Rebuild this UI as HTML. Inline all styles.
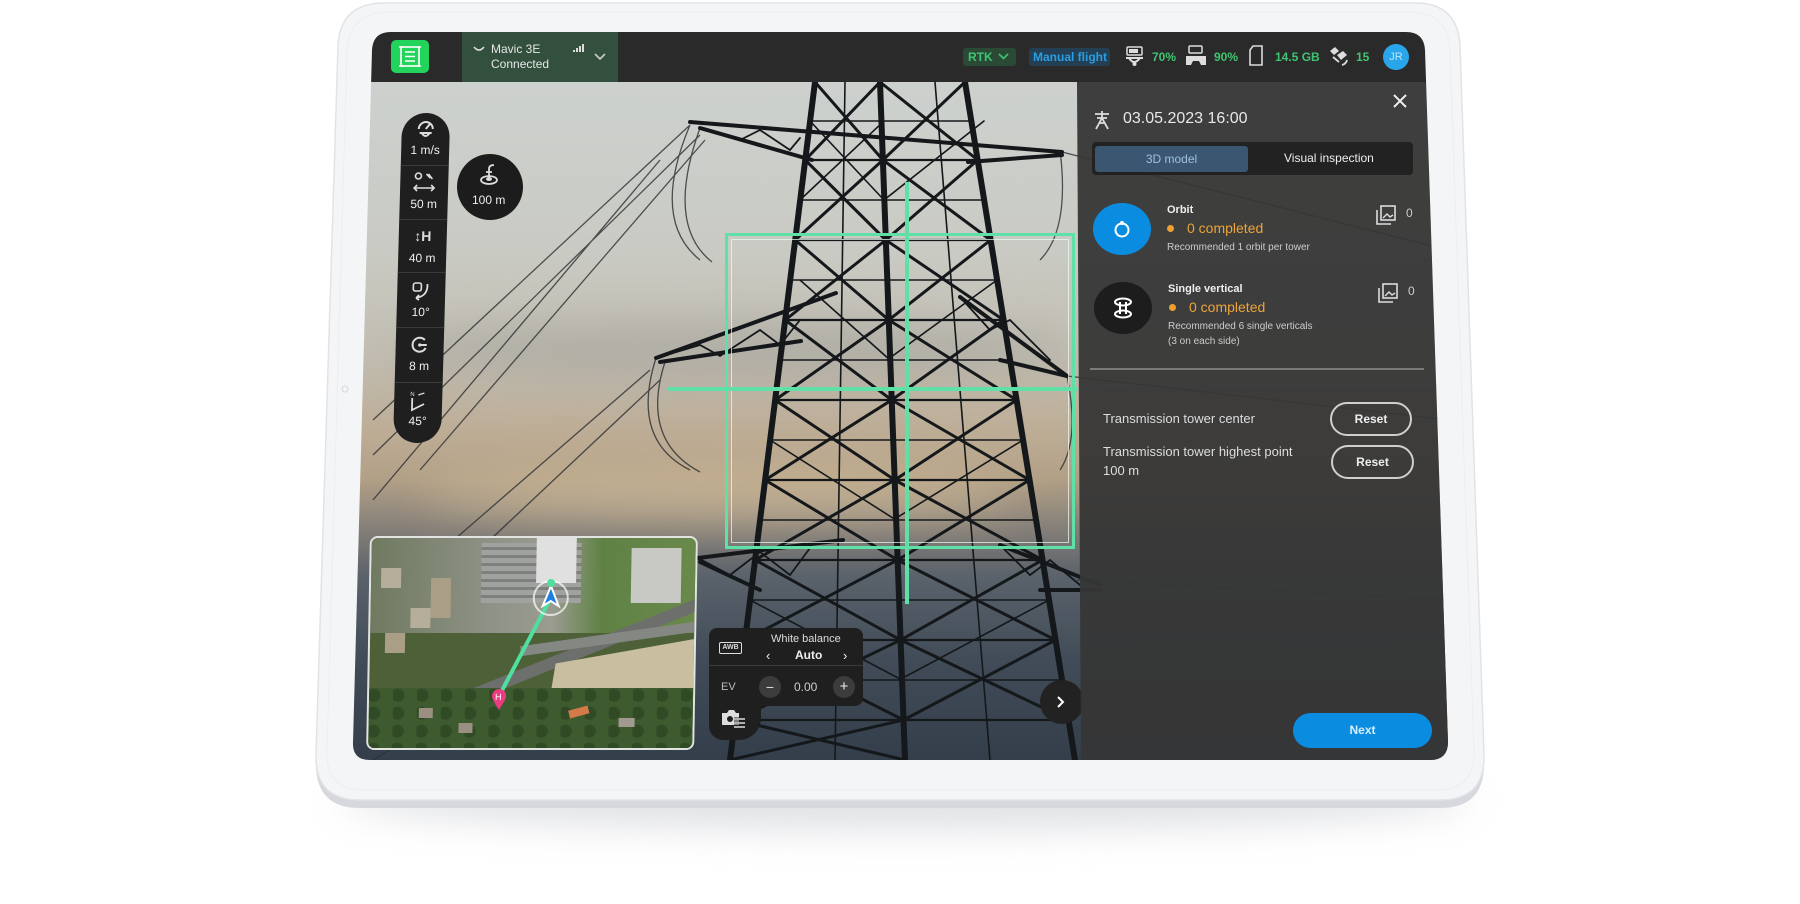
<!DOCTYPE html>
<html><head><meta charset="utf-8">
<style>
*{margin:0;padding:0;box-sizing:border-box}
body{width:1800px;height:904px;background:#fff;position:relative;overflow:hidden;font-family:"Liberation Sans",sans-serif;color:#fff}
.abs{position:absolute}
#screen{position:absolute;left:0;top:0;width:1800px;height:904px;clip-path:path("M391,32 L1406,32 Q1424,32 1425,50 L1448,742 Q1448,760 1430,760 L370,760 Q352,760 353,742 L372,50 Q373,32 391,32 Z")}
.t{position:absolute;white-space:nowrap}
.tb{position:absolute;left:393px;top:113px;width:48px;height:330px;background:#1f1f1f;border-radius:24px;transform:skewX(-1.6deg);transform-origin:bottom}
.tb .it{position:absolute;left:0;width:48px;text-align:center;font-size:12px;color:#eee}
.tb .sep{position:absolute;left:0;width:48px;height:1px;background:#3a3a3a}
.reset{position:absolute;border:2px solid #cfcfcf;border-radius:18px;font-size:12px;font-weight:bold;color:#eee;text-align:center}
</style></head><body>
<div class="abs" style="left:340px;top:770px;width:1130px;height:60px;border-radius:50%;background:#d8dade;filter:blur(18px);opacity:.8"></div>
<svg class="abs" style="left:0;top:0" width="1800" height="904">
<path d="M385,10 L1415,10 Q1458,10 1460,53 L1484,762 Q1485,808 1440,808 L360,808 Q315,808 316,762 L338,53 Q340,10 385,10 Z" fill="#d6d8dd"/>
<path d="M385,3 L1415,3 Q1458,3 1460,46 L1484,755 Q1485,800 1440,800 L360,800 Q315,800 316,755 L338,46 Q340,3 385,3 Z" fill="#f4f5f7" stroke="#e1e3e7" stroke-width="1.5"/>
<path d="M390,12 L1410,12 Q1448,12 1450,50 L1474,752 Q1475,790 1436,790 L364,790 Q326,790 327,752 L347,50 Q349,12 390,12 Z" fill="none" stroke="#eceef1" stroke-width="1"/>
<circle cx="345" cy="389" r="3" fill="none" stroke="#d5d7db"/>
</svg>

<div id="screen">
 <div class="abs" style="left:340px;top:80px;width:1120px;height:690px;background:linear-gradient(to bottom,#cdd1ce 0%,#c9cac3 25%,#c3beb2 40%,#bcab93 52%,#b19f86 58%,#857f78 65%,#5a626b 72%,#414c58 84%,#323d49 100%)"></div>
 <div class="abs" style="left:380px;top:320px;width:700px;height:60px;border-radius:50%;background:#9e9e98;filter:blur(20px);opacity:.5"></div>
 <div class="abs" style="left:420px;top:470px;width:600px;height:50px;border-radius:50%;background:#d8c39f;filter:blur(22px);opacity:.6"></div>
 <svg class="abs" style="left:0;top:0" width="1800" height="904">
  <g stroke="#2b2e31" stroke-width="1.3" fill="none" opacity=".8">
   <path d="M690,125 L373,420 M700,135 L373,455 M660,160 L373,500 M650,370 L373,610 M660,380 L373,650 M700,560 L373,760 M705,140 L420,470"/>
   <path d="M690,125 Q650,220 700,260 M700,128 Q665,225 712,262 M1060,150 Q1070,230 1040,260 M656,358 Q630,440 690,470 M665,362 Q640,440 700,472 M1067,376 Q1080,440 1060,470"/>
   <path d="M1062,152 L1448,250 M1067,376 L1448,420 M1077,580 L1448,600"/>
  </g>
  <g stroke="#15181b" fill="none" stroke-linecap="round">
   <path stroke-width="6" d="M815,82 L730,760 M880,82 L905,760 M965,82 L1075,760"/>
   <path stroke-width="3" d="M815,82 L882.9,160 M880,82 L805.2,160 M805.2,160 L885.8,240 M882.9,160 L795.2,240 M795.2,240 L888.8,320 M885.8,240 L785.2,320 M785.2,320 L891.7,400 M888.8,320 L775.1,400 M775.1,400 L894.7,480 M891.7,400 L765.1,480 M765.1,480 L897.6,560 M894.7,480 L755.1,560 M755.1,560 L900.6,640 M897.6,560 L745,640 M745,640 L903.5,720 M900.6,640 L735,720 M735,720 L905,760 M903.5,720 L730,760"/>
   <path stroke-width="3" d="M880,82 L977.7,160 M965,82 L882.9,160 M882.9,160 L990.6,240 M977.7,160 L885.8,240 M885.8,240 L1003.6,320 M990.6,240 L888.8,320 M888.8,320 L1016.6,400 M1003.6,320 L891.7,400 M891.7,400 L1029.6,480 M1016.6,400 L894.7,480 M894.7,480 L1042.6,560 M1029.6,480 L897.6,560 M897.6,560 L1055.5,640 M1042.6,560 L900.6,640 M900.6,640 L1068.5,720 M1055.5,640 L903.5,720"/>
   <path stroke-width="2.2" d="M805,160 L978,160 M795,240 L991,240 M785,320 L1004,320 M775,400 L1017,400 M765,480 L1030,480 M755,560 L1043,560 M745,640 L1056,640 M735,720 L1069,720"/>
   <path stroke-width="1.6" d="M810,121 L971,121 M800,200 L984,200 M790,280 L997,280 M780,360 L1010,360 M770,440 L1023,440 M760,520 L1036,520 M750,600 L1049,600 M740,680 L1062,680 M810,121 L884,200 M884,121 L800,200 M984,121 L884,200 M800,280 L890,360 M997,280 L887,360 M770,440 L896,520 M1023,440 L893,520 M750,600 L902,680 M1049,600 L899,680 M845,82 L835,760 M935,82 L990,760"/>
   <path stroke-width="4" d="M690,122 L1062,152 M700,128 L812,160 M968,162 L1062,155 M656,358 L836,293 M660,362 L801,341 M960,297 L1067,376 M1000,360 L1067,376 M698,558 L843,540 M700,562 L760,590 M1000,545 L1100,585 M1040,590 L1100,590"/>
   <path stroke-width="1.8" d="M700,128 L740,140 L760,130 L790,150 L800,138 M656,358 L700,345 L720,356 L760,330 L780,345 L800,320 M960,297 L990,330 L1010,320 L1040,350 L1050,360 M698,558 L730,575 L760,552 L790,575 L810,548 M1000,545 L1030,575 L1050,560 L1080,585"/>
  </g>
 </svg>
 <div class="abs" style="left:725px;top:233px;width:350px;height:316px;border:3px solid #5fe0a6"></div>
 <div class="abs" style="left:731px;top:239px;width:338px;height:304px;border:1px solid rgba(235,255,245,.7)"></div>
 <div class="abs" style="left:905px;top:182px;width:4px;height:422px;background:#5fe0a6"></div>
 <div class="abs" style="left:668px;top:387px;width:410px;height:4px;background:#5fe0a6"></div>

 <div class="abs" style="left:340px;top:32px;width:1120px;height:50px;background:#2a2a2a"></div>
 <div class="abs" style="left:391px;top:40px;width:38px;height:33px;background:#22d45c;border-radius:5px"></div>
 <svg class="abs" style="left:398px;top:45px" width="24" height="23"><rect x="3" y="2" width="18" height="19" fill="none" stroke="#fff" stroke-width="1.6"/><path d="M7,7 H17 M7,11.5 H17 M7,16 H17" stroke="#fff" stroke-width="1.6"/><path d="M1,2H5M19,2H23M1,21H5M19,21H23" stroke="#fff" stroke-width="1.6"/></svg>
 <div class="abs" style="left:462px;top:32px;width:156px;height:50px;background:#33503f"></div>
 <svg class="abs" style="left:473px;top:45px" width="12" height="8"><path d="M1,2 Q6,8 11,2 M4,5 H8" stroke="#ddd" stroke-width="1.6" fill="none"/></svg>
 <div class="t" style="left:491px;top:42px;font-size:12px;color:#e6e6e6">Mavic 3E</div>
 <div class="t" style="left:491px;top:57px;font-size:12px;color:#e6e6e6">Connected</div>
 <svg class="abs" style="left:573px;top:43px" width="12" height="10"><path d="M1,9V7M4,9V5M7,9V3M10,9V1" stroke="#ddd" stroke-width="2"/></svg>
 <svg class="abs" style="left:594px;top:53px" width="12" height="8"><path d="M1,1 L6,6 L11,1" stroke="#ccc" stroke-width="1.6" fill="none"/></svg>
 <div class="abs" style="left:963px;top:48px;width:53px;height:18px;background:#2b4a36;border-radius:3px"></div>
 <div class="t" style="left:968px;top:50px;font-size:12px;color:#3fc471;font-weight:bold">RTK</div>
 <svg class="abs" style="left:998px;top:53px" width="11" height="8"><path d="M1,1 L5.5,5.5 L10,1" stroke="#3fc471" stroke-width="1.6" fill="none"/></svg>
 <div class="abs" style="left:1029px;top:48px;width:81px;height:18px;background:#233f54;border-radius:3px"></div>
 <div class="t" style="left:1033px;top:50px;font-size:12px;color:#2a9ee2;font-weight:bold">Manual flight</div>
 <svg class="abs" style="left:1124px;top:46px" width="22" height="22"><rect x="3" y="1" width="15" height="8" rx="1" fill="none" stroke="#ddd" stroke-width="1.5"/><rect x="5" y="3" width="9" height="4" fill="#ddd"/><path d="M2,12 H19 M5,12 Q10,20 16,12" stroke="#ddd" stroke-width="2" fill="none"/><circle cx="10.5" cy="18" r="2" fill="#ddd"/></svg>
 <div class="t" style="left:1152px;top:50px;font-size:12px;color:#3fc471;font-weight:bold">70%</div>
 <svg class="abs" style="left:1184px;top:45px" width="24" height="22"><rect x="5" y="1" width="13" height="7" rx="1" fill="none" stroke="#ddd" stroke-width="1.5"/><path d="M2,11 H22 L22,20 L17,20 L15,16 H9 L7,20 H2 Z" fill="#ddd"/></svg>
 <div class="t" style="left:1214px;top:50px;font-size:12px;color:#3fc471;font-weight:bold">90%</div>
 <svg class="abs" style="left:1248px;top:45px" width="16" height="22"><path d="M5,1 H14 V20 H2 V5 Z" fill="none" stroke="#ddd" stroke-width="1.6"/></svg>
 <div class="t" style="left:1275px;top:50px;font-size:12px;color:#3fc471;font-weight:bold">14.5 GB</div>
 <svg class="abs" style="left:1327px;top:45px" width="22" height="22"><path d="M3,6 L8,2 L12,6 L7,10 Z M10,10 L16,6 L20,10 L14,15 Z" fill="#ddd"/><path d="M6,12 L12,17 M15,20 Q19,19 20,15" stroke="#ddd" stroke-width="1.8" fill="none"/></svg>
 <div class="t" style="left:1356px;top:50px;font-size:12px;color:#3fc471;font-weight:bold">15</div>
 <div class="abs" style="left:1383px;top:44px;width:26px;height:26px;border-radius:50%;background:#29a6ea;font-size:11px;text-align:center;line-height:26px;color:#bfe4f8">JR</div>

 <div class="tb">
  <svg class="abs" style="left:15px;top:6px" width="18" height="20"><path d="M2,10 A7,7 0 0 1 16,10" stroke="#ddd" stroke-width="2" fill="none"/><path d="M9,10 L13,5" stroke="#ddd" stroke-width="2"/><path d="M3,14 H15 M5,14 Q9,20 13,14" stroke="#ddd" stroke-width="2" fill="none"/></svg>
  <div class="it" style="top:30px">1 m/s</div>
  <div class="sep" style="top:52px"></div>
  <svg class="abs" style="left:12px;top:58px" width="24" height="24"><circle cx="6" cy="5" r="3" fill="none" stroke="#ddd" stroke-width="1.6"/><path d="M14,3 L18,7 M16,3 L20,8" stroke="#ddd" stroke-width="1.6"/><path d="M2,17 H22 M5,14 L2,17 L5,20 M19,14 L22,17 L19,20" stroke="#ddd" stroke-width="1.6" fill="none"/></svg>
  <div class="it" style="top:84px">50 m</div>
  <div class="sep" style="top:106px"></div>
  <div class="it" style="top:115px;font-size:14px;font-weight:bold;color:#ddd">↕H</div>
  <div class="it" style="top:138px">40 m</div>
  <div class="sep" style="top:159px"></div>
  <svg class="abs" style="left:14px;top:168px" width="20" height="20"><rect x="2" y="2" width="8" height="8" rx="2" fill="none" stroke="#ddd" stroke-width="1.6"/><path d="M16,3 Q17,15 5,17 M5,17 L8,14 M5,17 L8,19" stroke="#ddd" stroke-width="1.8" fill="none"/></svg>
  <div class="it" style="top:192px">10°</div>
  <div class="sep" style="top:214px"></div>
  <svg class="abs" style="left:15px;top:223px" width="18" height="18"><path d="M14,4 A7,7 0 1 0 15,12" stroke="#ddd" stroke-width="2" fill="none"/><path d="M9,9 H16" stroke="#ddd" stroke-width="2"/><circle cx="9" cy="9" r="1.6" fill="#ddd"/></svg>
  <div class="it" style="top:246px">8 m</div>
  <div class="sep" style="top:269px"></div>
  <svg class="abs" style="left:14px;top:277px" width="20" height="22"><path d="M4,8 V20 L16,14" stroke="#ddd" stroke-width="1.8" fill="none"/><text x="2" y="6" font-size="6" fill="#ddd" font-family="Liberation Sans">N</text><path d="M10,5 L16,3" stroke="#ddd" stroke-width="1.4"/></svg>
  <div class="it" style="top:301px">45°</div>
 </div>
 <div class="abs" style="left:457px;top:154px;width:66px;height:66px;border-radius:50%;background:#1c1c1c"></div>
 <svg class="abs" style="left:478px;top:163px" width="24" height="24"><ellipse cx="11" cy="17" rx="8" ry="4" fill="none" stroke="#ddd" stroke-width="1.8"/><ellipse cx="11" cy="16" rx="3" ry="2" fill="#ddd"/><path d="M11,15 V6 Q11,2 16,2 M8,9 H14" stroke="#ddd" stroke-width="1.8" fill="none"/></svg>
 <div class="t" style="left:472px;top:193px;font-size:12px;color:#eee">100 m</div>

 <div class="abs" style="left:368px;top:536px;width:328px;height:214px;border:2px solid #e2e4e2;border-radius:8px;overflow:hidden;background:#4d6038;transform:skewX(-1deg)">
  <div class="abs" style="left:0;top:0;width:330px;height:95px;background:linear-gradient(90deg,#6f7a60,#8e9186 35%,#9a9c90 55%,#5f8244 70%,#6a8a4c)"></div>
  <div class="abs" style="left:110px;top:5px;width:100px;height:60px;background:repeating-linear-gradient(0deg,#9fa29e 0 5px,#7d807c 5px 8px)"></div>
  <div class="abs" style="left:165px;top:0;width:40px;height:45px;background:#dfe0df"></div>
  <div class="abs" style="left:260px;top:10px;width:50px;height:55px;background:#c8c9c5"></div>
  <div class="abs" style="left:10px;top:30px;width:20px;height:20px;background:#b6ae9b"></div>
  <div class="abs" style="left:40px;top:70px;width:20px;height:20px;background:#b6ae9b"></div>
  <div class="abs" style="left:15px;top:95px;width:20px;height:20px;background:#aa9f86"></div>
  <div class="abs" style="left:60px;top:40px;width:20px;height:40px;background:#aa9f86"></div>
  <div class="abs" style="left:-30px;top:120px;width:420px;height:12px;background:#6c6f6c;transform:rotate(-22deg)"></div>
  <div class="abs" style="left:150px;top:95px;width:190px;height:10px;background:#858783;transform:rotate(-8deg)"></div>
  <div class="abs" style="left:150px;top:100px;width:180px;height:85px;background:#c9bea0;clip-path:polygon(20% 30%,100% 0,100% 60%,15% 100%)"></div>
  <div class="abs" style="left:0;top:150px;width:330px;height:70px;background:radial-gradient(circle at 20% 40%,#2f4a24 0 6px,transparent 7px) 0 0/24px 18px,#3e5a2f"></div>
  <div class="abs" style="left:200px;top:170px;width:20px;height:8px;background:#d27a48;transform:rotate(-15deg)"></div>
  <div class="abs" style="left:50px;top:170px;width:14px;height:10px;background:#9a8f80"></div>
  <div class="abs" style="left:90px;top:185px;width:14px;height:10px;background:#9a8f80"></div>
  <div class="abs" style="left:250px;top:180px;width:16px;height:9px;background:#a09a90"></div>
  <svg class="abs" style="left:0;top:0" width="330" height="214"><path d="M180,60 L130,158" stroke="#4fe0a0" stroke-width="4"/><circle cx="180" cy="60" r="17" fill="none" stroke="rgba(255,255,255,.7)" stroke-width="2"/><path d="M180,48 L188,68 L180,63 L172,68 Z" fill="#1e7fe0" stroke="#fff" stroke-width="2"/><circle cx="180" cy="45" r="4" fill="#4fe0a0"/><circle cx="130" cy="158" r="7" fill="#ee3a80"/><path d="M124,162 L130,172 L136,162" fill="#ee3a80"/><text x="126" y="162" font-size="9" fill="#fff" font-family="Liberation Sans">H</text></svg>
 </div>

 <div class="abs" style="left:709px;top:628px;width:154px;height:78px;background:#1f1f1f;border-radius:8px"></div>
 <div class="abs" style="left:709px;top:690px;width:52px;height:50px;background:#1f1f1f;border-radius:0 0 22px 14px"></div>
 <div class="abs" style="left:709px;top:665px;width:154px;height:1px;background:#3a3a3a"></div>
 <div class="abs" style="left:719px;top:642px;width:23px;height:12px;border:1.5px solid #ddd;border-radius:2px;font-size:7px;font-weight:bold;color:#ddd;text-align:center;line-height:9px">AWB</div>
 <div class="t" style="left:771px;top:633px;font-size:11px;color:#ddd">White balance</div>
 <div class="t" style="left:766px;top:648px;font-size:13px;color:#eee">‹</div>
 <div class="t" style="left:795px;top:648px;font-size:12px;color:#eee;font-weight:bold">Auto</div>
 <div class="t" style="left:843px;top:648px;font-size:13px;color:#eee">›</div>
 <div class="t" style="left:721px;top:681px;font-size:11px;color:#bbb">EV</div>
 <div class="abs" style="left:759px;top:676px;width:22px;height:22px;border-radius:50%;background:#3c3c3c;text-align:center;line-height:22px;font-size:14px;color:#ddd">−</div>
 <div class="t" style="left:794px;top:680px;font-size:12px;color:#ccc">0.00</div>
 <div class="abs" style="left:833px;top:676px;width:22px;height:22px;border-radius:50%;background:#3c3c3c;text-align:center;line-height:22px;font-size:15px;color:#eee">+</div>
 <svg class="abs" style="left:720px;top:707px" width="26" height="22"><path d="M2,6 H7 L9,3 H14 L16,6 H19 V18 H2 Z" fill="#ddd"/><circle cx="10" cy="12" r="3" fill="#1f1f1f"/><path d="M14,12 H25 M14,16 H25 M14,20 H25" stroke="#1f1f1f" stroke-width="3"/><path d="M14,12 H25 M14,16 H25 M14,20 H25" stroke="#ddd" stroke-width="1.4"/></svg>
 <div class="abs" style="left:1040px;top:680px;width:44px;height:44px;border-radius:50%;background:#222"></div>
 <svg class="abs" style="left:1056px;top:695px" width="10" height="14"><path d="M2,2 L7,7 L2,12" stroke="#fff" stroke-width="2" fill="none"/></svg>

 <div class="abs" style="left:1077px;top:82px;width:380px;height:680px;background:rgba(54,54,54,.95);clip-path:polygon(0 0,100% 0,100% 100%,4px 100%)"></div>
 <svg class="abs" style="left:1393px;top:94px" width="14" height="14"><path d="M1,1 L13,13 M13,1 L1,13" stroke="#eee" stroke-width="2"/></svg>
 <svg class="abs" style="left:1093px;top:110px" width="18" height="20"><path d="M2,4 H16 M4,8 H14 M9,1 V8 M9,8 L3,19 M9,8 L15,19 M6,13 H12" stroke="#ddd" stroke-width="1.8" fill="none"/></svg>
 <div class="t" style="left:1123px;top:110px;font-size:16px;color:#e8e8e8">03.05.2023 16:00</div>
 <div class="abs" style="left:1092px;top:142px;width:321px;height:33px;background:#222;border-radius:4px"></div>
 <div class="abs" style="left:1095px;top:146px;width:153px;height:26px;background:#3b5670;border-radius:3px;text-align:center;line-height:26px;font-size:12px;color:#9cc0e0">3D model</div>
 <div class="t" style="left:1284px;top:151px;font-size:12px;color:#eee">Visual inspection</div>

 <div class="abs" style="left:1093px;top:203px;width:58px;height:52px;border-radius:50%;background:#0a8de0"></div>
 <svg class="abs" style="left:1111px;top:218px" width="22" height="22"><circle cx="11" cy="12" r="6.5" fill="none" stroke="#fff" stroke-width="2"/><circle cx="11" cy="5" r="2" fill="#fff"/></svg>
 <div class="t" style="left:1167px;top:204px;font-size:11px;font-weight:bold;color:#eee">Orbit</div>
 <div class="abs" style="left:1167px;top:225px;width:7px;height:7px;border-radius:50%;background:#f0a030"></div>
 <div class="t" style="left:1187px;top:220px;font-size:14px;color:#eda43a">0 completed</div>
 <div class="t" style="left:1167px;top:242px;font-size:10px;color:#ccc">Recommended 1 orbit per tower</div>
 <svg class="abs" style="left:1375px;top:204px" width="22" height="22"><rect x="6" y="2" width="14" height="14" fill="none" stroke="#ddd" stroke-width="1.6"/><path d="M2,6 V20 H16" stroke="#ddd" stroke-width="1.6" fill="none"/><path d="M8,14 L12,10 L15,13 L18,11" stroke="#ddd" stroke-width="1.4" fill="none"/></svg>
 <div class="t" style="left:1406px;top:206px;font-size:12px;color:#ccc">0</div>

 <div class="abs" style="left:1094px;top:282px;width:58px;height:52px;border-radius:50%;background:#1d1d1d"></div>
 <svg class="abs" style="left:1112px;top:296px" width="22" height="24"><ellipse cx="11" cy="6" rx="8" ry="3.5" fill="none" stroke="#fff" stroke-width="2"/><ellipse cx="11" cy="18" rx="8" ry="3.5" fill="none" stroke="#fff" stroke-width="2"/><path d="M8,6 V18 M14,6 V18" stroke="#fff" stroke-width="2"/></svg>
 <div class="t" style="left:1168px;top:283px;font-size:11px;font-weight:bold;color:#eee">Single vertical</div>
 <div class="abs" style="left:1169px;top:304px;width:7px;height:7px;border-radius:50%;background:#f0a030"></div>
 <div class="t" style="left:1189px;top:299px;font-size:14px;color:#eda43a">0 completed</div>
 <div class="t" style="left:1168px;top:321px;font-size:10px;color:#ccc">Recommended 6 single verticals</div>
 <div class="t" style="left:1168px;top:336px;font-size:10px;color:#ccc">(3 on each side)</div>
 <svg class="abs" style="left:1377px;top:282px" width="22" height="22"><rect x="6" y="2" width="14" height="14" fill="none" stroke="#ddd" stroke-width="1.6"/><path d="M2,6 V20 H16" stroke="#ddd" stroke-width="1.6" fill="none"/><path d="M8,14 L12,10 L15,13 L18,11" stroke="#ddd" stroke-width="1.4" fill="none"/></svg>
 <div class="t" style="left:1408px;top:284px;font-size:12px;color:#ccc">0</div>
 <div class="abs" style="left:1090px;top:368px;width:334px;height:2px;background:#7a7a7a"></div>

 <div class="t" style="left:1103px;top:411px;font-size:13px;color:#ddd">Transmission tower center</div>
 <div class="reset" style="left:1330px;top:402px;width:82px;height:34px;line-height:30px">Reset</div>
 <div class="t" style="left:1103px;top:444px;font-size:13px;color:#ddd">Transmission tower highest point</div>
 <div class="t" style="left:1103px;top:463px;font-size:13px;color:#ddd">100 m</div>
 <div class="reset" style="left:1331px;top:445px;width:83px;height:34px;line-height:30px">Reset</div>
 <div class="abs" style="left:1293px;top:713px;width:139px;height:35px;border-radius:18px;background:#0a8de0;text-align:center;line-height:35px;font-size:12px;font-weight:bold;color:#d8efff">Next</div>
</div>
</body></html>
